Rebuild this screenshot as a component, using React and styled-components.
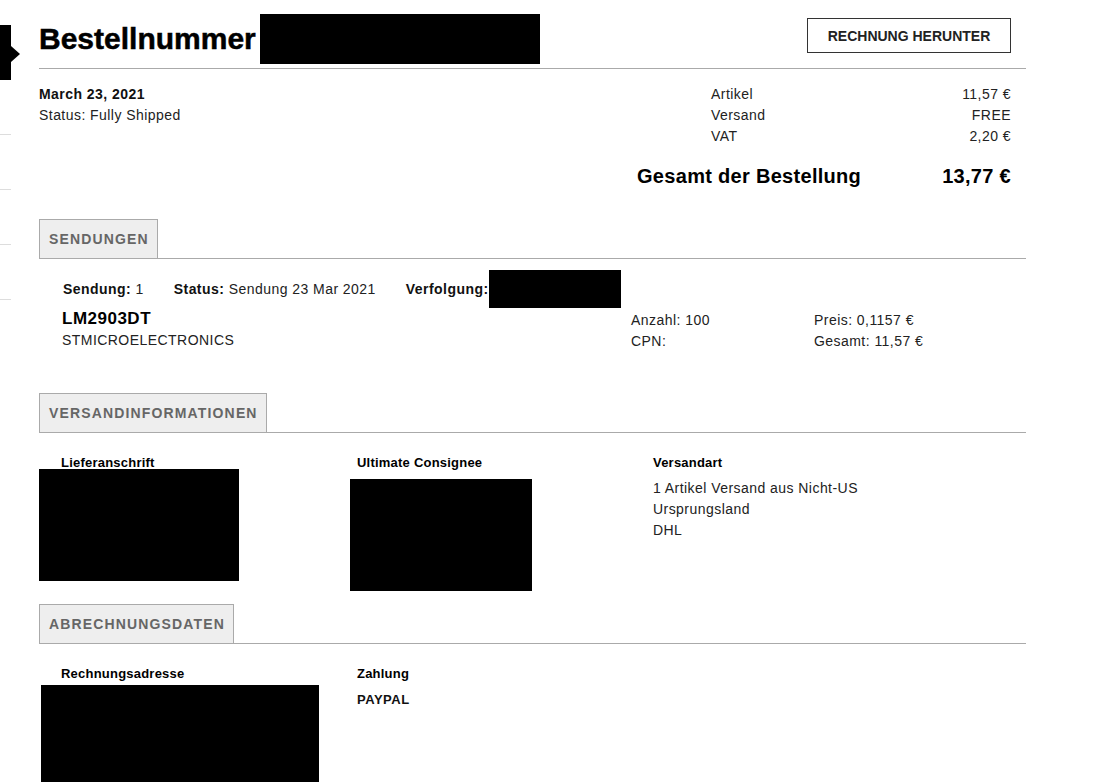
import React from "react";
import styled, { createGlobalStyle } from "styled-components";

const GlobalStyle = createGlobalStyle`
  html, body {
    margin: 0;
    overflow: hidden;
    background: #fff;
  }
  body {
    font-family: "Liberation Sans", Arial, sans-serif;
    color: #222;
  }
`;

const Page = styled.div`
  display: flex;
  align-items: flex-start;
  height: 782px;
  overflow: hidden;
`;

const Sidebar = styled.nav`
  width: 11px;
  flex-shrink: 0;
  padding-top: 25px;
`;
const NavItem = styled.div`
  position: relative;
  height: 54px;
  border-bottom: 1px solid ${(p) => (p.active ? "#000" : "#ddd")};
  background: ${(p) => (p.active ? "#000" : "transparent")};

  &::after {
    content: "";
    display: ${(p) => (p.active ? "block" : "none")};
    position: absolute;
    left: 11px;
    top: 21px;
    border-left: 9px solid #000;
    border-top: 8px solid transparent;
    border-bottom: 8px solid transparent;
  }
`;

const Main = styled.main`
  margin-left: 28px;
  width: 987px;
`;

const Header = styled.header`
  display: flex;
  justify-content: space-between;
  align-items: flex-start;
  height: 68px;
  border-bottom: 1px solid #aaa;
`;
const TitleRow = styled.div`
  display: flex;
  align-items: center;
  height: 50px;
  margin-top: 14px;
`;
const Title = styled.h1`
  margin: 0;
  font-size: 30px;
  font-weight: 700;
  color: #000;
  -webkit-text-stroke: 0.5px #000;
`;
const Redacted = styled.div`
  flex-shrink: 0;
  width: ${(p) => p.w}px;
  height: ${(p) => p.h}px;
  margin: ${(p) => p.m || "0"};
  background: #000;
`;
const OutlineButton = styled.button`
  display: flex;
  align-items: center;
  justify-content: center;
  box-sizing: border-box;
  width: 204px;
  height: 35px;
  margin: 18px 15px 0 0;
  padding: 0;
  border: 1px solid #333;
  background: #fff;
  font-family: inherit;
  font-size: 14px;
  font-weight: 700;
  color: #222;
`;

const InfoRow = styled.section`
  display: flex;
  justify-content: space-between;
  align-items: flex-start;
  padding-top: 15px;
`;
const Meta = styled.div`
  font-size: 14px;
  line-height: 21px;
  letter-spacing: 0.45px;
`;
const Strong = styled.span`
  font-weight: 700;
  color: #111;
`;
const Summary = styled.div`
  width: 374px;
  margin-right: 15px;
`;
const SumRow = styled.div`
  display: flex;
  justify-content: space-between;
  padding-left: 74px;
  font-size: 14px;
  line-height: 21px;
  letter-spacing: 0.45px;
`;
const TotalRow = styled.div`
  display: flex;
  justify-content: space-between;
  margin-top: 14px;
  font-size: 20px;
  font-weight: 700;
  line-height: 30px;
  letter-spacing: 0.3px;
  color: #000;
`;

const TabBar = styled.div`
  display: flex;
  margin-top: ${(p) => p.mt}px;
  border-bottom: 1px solid #aaa;
`;
const Tab = styled.div`
  display: flex;
  align-items: center;
  height: 38px;
  padding: 0 8px 0 9px;
  border: 1px solid #aaa;
  border-bottom: none;
  background: #eee;
  font-size: 14px;
  font-weight: 700;
  letter-spacing: 1.15px;
  color: #666;
`;

const ShipMeta = styled.div`
  display: flex;
  align-items: center;
  gap: 30px;
  height: 38px;
  margin-top: 11px;
  padding-left: 24px;
  font-size: 14px;
  letter-spacing: 0.45px;
`;
const Group = styled.div`
  display: flex;
  align-items: center;
  white-space: pre;
`;

const ItemRow = styled.div`
  display: grid;
  grid-template-columns: 569px 183px 1fr;
  padding-left: 23px;
  font-size: 14px;
  line-height: 21px;
  letter-spacing: 0.45px;
`;
const PartNo = styled.div`
  font-size: 17px;
  font-weight: 700;
  line-height: 22px;
  letter-spacing: 0.5px;
  color: #000;
`;
const ItemCol = styled.div`
  padding-top: 2px;
`;

const ColGrid = styled.div`
  display: grid;
  grid-template-columns: repeat(3, 296px);
  align-items: start;
  margin-top: 22px;
`;
const ColLabel = styled.div`
  padding-left: 22px;
  font-size: 13px;
  font-weight: 700;
  line-height: 16px;
  letter-spacing: 0.22px;
  color: #000;
`;
const ColText = styled.div`
  margin-top: ${(p) => p.mt || 0}px;
  padding-left: 22px;
  font-size: ${(p) => (p.bold ? 13 : 14)}px;
  font-weight: ${(p) => (p.bold ? 700 : 400)};
  line-height: ${(p) => (p.bold ? 16 : 21)}px;
  letter-spacing: ${(p) => (p.bold ? 0.5 : 0.45)}px;
  color: ${(p) => (p.bold ? "#111" : "#222")};
`;

export default function App() {
  return (
    <>
      <GlobalStyle />
      <Page>
        <Sidebar>
          <NavItem active />
          <NavItem />
          <NavItem />
          <NavItem />
          <NavItem />
        </Sidebar>

        <Main>
          <Header>
            <TitleRow>
              <Title>Bestellnummer</Title>
              <Redacted w={280} h={50} m="0 0 0 4px" />
            </TitleRow>
            <OutlineButton>RECHNUNG HERUNTER</OutlineButton>
          </Header>

          <InfoRow>
            <Meta>
              <Strong>March 23, 2021</Strong>
              <div>Status: Fully Shipped</div>
            </Meta>
            <Summary>
              <SumRow>
                <span>Artikel</span>
                <span>11,57 €</span>
              </SumRow>
              <SumRow>
                <span>Versand</span>
                <span>FREE</span>
              </SumRow>
              <SumRow>
                <span>VAT</span>
                <span>2,20 €</span>
              </SumRow>
              <TotalRow>
                <span>Gesamt der Bestellung</span>
                <span>13,77 €</span>
              </TotalRow>
            </Summary>
          </InfoRow>

          <TabBar mt={28}>
            <Tab>SENDUNGEN</Tab>
          </TabBar>
          <ShipMeta>
            <Group>
              <Strong>Sendung:</Strong> 1
            </Group>
            <Group>
              <Strong>Status:</Strong> Sendung 23 Mar 2021
            </Group>
            <Group>
              <Strong>Verfolgung:</Strong>
              <Redacted w={132} h={38} />
            </Group>
          </ShipMeta>
          <ItemRow>
            <div>
              <PartNo>LM2903DT</PartNo>
              <div>STMICROELECTRONICS</div>
            </div>
            <ItemCol>
              <div>Anzahl: 100</div>
              <div>CPN:</div>
            </ItemCol>
            <ItemCol>
              <div>Preis: 0,1157 €</div>
              <div>Gesamt: 11,57 €</div>
            </ItemCol>
          </ItemRow>

          <TabBar mt={41}>
            <Tab>VERSANDINFORMATIONEN</Tab>
          </TabBar>
          <ColGrid>
            <div>
              <ColLabel>Lieferanschrift</ColLabel>
              <Redacted w={200} h={112} m="-2px 0 0 0" />
            </div>
            <div>
              <ColLabel>Ultimate Consignee</ColLabel>
              <Redacted w={182} h={112} m="8px 0 0 15px" />
            </div>
            <div>
              <ColLabel>Versandart</ColLabel>
              <ColText mt={7}>
                <div>1 Artikel Versand aus Nicht-US</div>
                <div>Ursprungsland</div>
                <div>DHL</div>
              </ColText>
            </div>
          </ColGrid>

          <TabBar mt={13}>
            <Tab>ABRECHNUNGSDATEN</Tab>
          </TabBar>
          <ColGrid>
            <div>
              <ColLabel>Rechnungsadresse</ColLabel>
              <Redacted w={278} h={120} m="3px 0 0 2px" />
            </div>
            <div>
              <ColLabel>Zahlung</ColLabel>
              <ColText bold mt={10}>
                PAYPAL
              </ColText>
            </div>
          </ColGrid>
        </Main>
      </Page>
    </>
  );
}
